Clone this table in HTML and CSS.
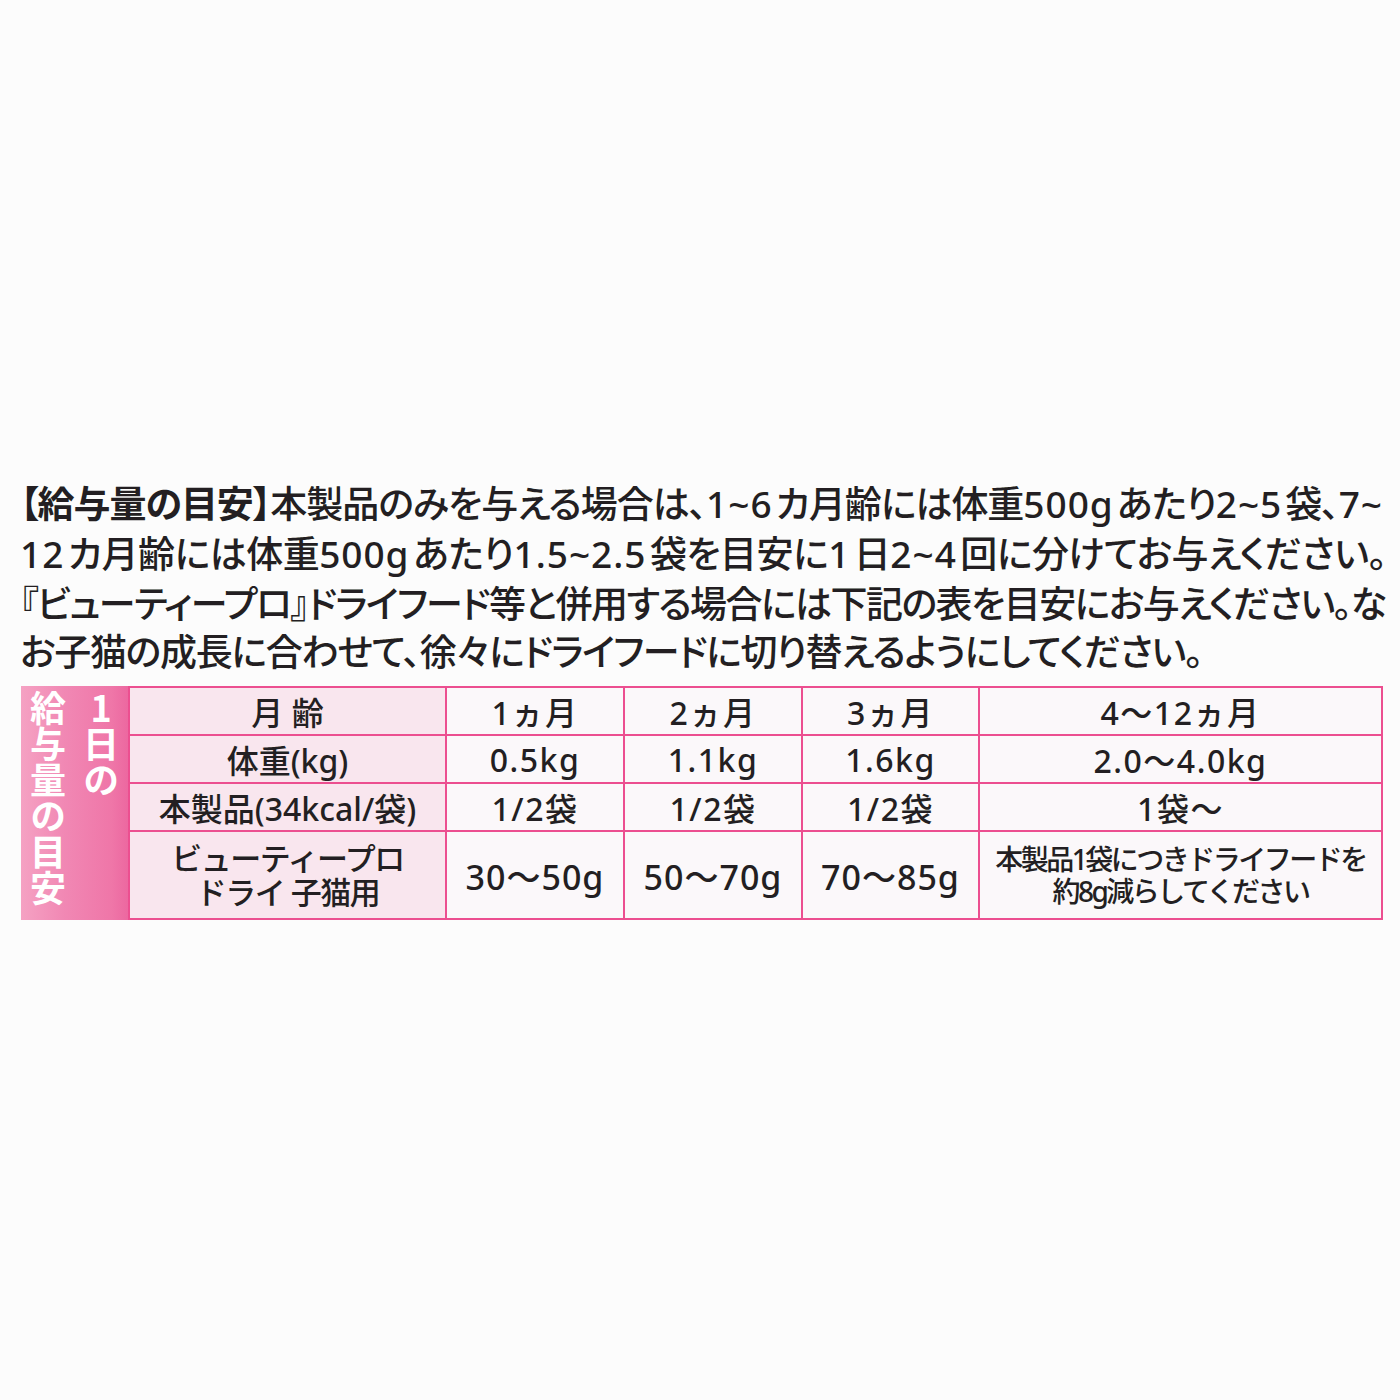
FILE: index.html
```html
<!DOCTYPE html>
<html lang="ja">
<head>
<meta charset="utf-8">
<title>給与量の目安</title>
<link rel="stylesheet" href="styles.css">
</head>
<body>
<main class="page">
  <p class="desc">
    <span class="line"><b class="head">【給与量の目安】</b>本製品のみを与える場合は、<span class="num">1~6</span>カ月齢には体重<span class="num">500g</span>あたり<span class="num">2~5</span>袋、<span class="num">7~</span></span>
    <span class="line"><span class="num">12</span>カ月齢には体重<span class="num">500g</span>あたり<span class="num">1.5~2.5</span>袋を目安に<span class="num">1</span>日<span class="num">2~4</span>回に分けてお与えください。</span>
    <span class="line">『ビューティープロ』ドライフード等と併用する場合には下記の表を目安にお与えください。な</span>
    <span class="line last">お子猫の成長に合わせて、徐々にドライフードに切り替えるようにしてください。</span>
  </p>
  <div class="table">
    <div class="side"><div class="side-text">1日の<br>給与量の目安</div></div>
    <div class="cell label first">月 齢</div>
    <div class="cell top">1ヵ月</div>
    <div class="cell top">2ヵ月</div>
    <div class="cell top">3ヵ月</div>
    <div class="cell top">4～12ヵ月</div>

    <div class="cell label">体重(kg)</div>
    <div class="cell">0.5kg</div>
    <div class="cell">1.1kg</div>
    <div class="cell">1.6kg</div>
    <div class="cell">2.0～4.0kg</div>

    <div class="cell label">本製品(34kcal/袋)</div>
    <div class="cell">1/2袋</div>
    <div class="cell">1/2袋</div>
    <div class="cell">1/2袋</div>
    <div class="cell">1袋～</div>

    <div class="cell label two">ビューティープロ<br>ドライ 子猫用</div>
    <div class="cell big">30～50g</div>
    <div class="cell big">50～70g</div>
    <div class="cell big">70～85g</div>
    <div class="cell note">本製品1袋につきドライフードを<br>約8g減らしてください</div>
  </div>
</main>
</body>
</html>
```

FILE: styles.css
```css
html, body {
  margin: 0;
  padding: 0;
  background: #fcfcfc;
}

.page {
  width: 1400px;
  height: 1400px;
  box-sizing: border-box;
  padding: 478px 17px 0 20px;
  font-family: "Noto Sans CJK JP", "Noto Sans", sans-serif;
  color: #231f22;
}

.desc {
  margin: 0;
  width: 1363px;
  font-size: 37px;
  line-height: 48px;
  letter-spacing: -4px;
  font-weight: 500;
  font-feature-settings: "palt";
}

.line {
  display: block;
  text-align: justify;
  text-align-last: justify;
}

.line.last {
  text-align-last: left;
  letter-spacing: -1.3px;
}

.num {
  font-family: "Noto Sans", "Noto Sans CJK JP", sans-serif;
  letter-spacing: 1px;
}

.head {
  font-weight: 700;
}

.table {
  margin: 12px 0 0 1px;
  display: grid;
  grid-template-columns: 107px 319px 178px 178px 177px 403px;
  grid-template-rows: 50px 48px 48px 88px;
  width: 1362px;
}

.side {
  grid-row: 1 / span 4;
  grid-column: 1;
  overflow: hidden;
  background: linear-gradient(to right, #f5a2c3 0%, #f188b4 40%, #ef76a8 85%, #ec68a0 100%);
  box-sizing: border-box;
}

.side-text {
  writing-mode: vertical-rl;
  text-orientation: upright;
  height: 240px;
  font-size: 36px;
  line-height: 53px;
  font-weight: 700;
  color: #ffffff;
  padding-top: 4px;
}

.cell {
  box-sizing: border-box;
  display: flex;
  align-items: center;
  justify-content: center;
  text-align: center;
  border-right: 2px solid #ec4f90;
  border-bottom: 2px solid #ec4f90;
  background: #fbf8fa;
  font-family: "Noto Sans", "Noto Sans CJK JP", sans-serif;
  font-size: 32px;
  font-weight: 500;
  letter-spacing: 1.5px;
  white-space: nowrap;
}

.cell.top {
  border-top: 2px solid #ec4f90;
}

.label {
  background: #f9e6ee;
  border-left: 2px solid #ec4f90;
  letter-spacing: 0;
}

.label.first {
  border-top: 2px solid #ec4f90;
}

.label.two {
  font-size: 31px;
  line-height: 34px;
  letter-spacing: -1.5px;
}

.cell.big {
  font-size: 34px;
  letter-spacing: 1px;
}

.cell.note {
  font-size: 28px;
  line-height: 32px;
  letter-spacing: -2.5px;
}
```
